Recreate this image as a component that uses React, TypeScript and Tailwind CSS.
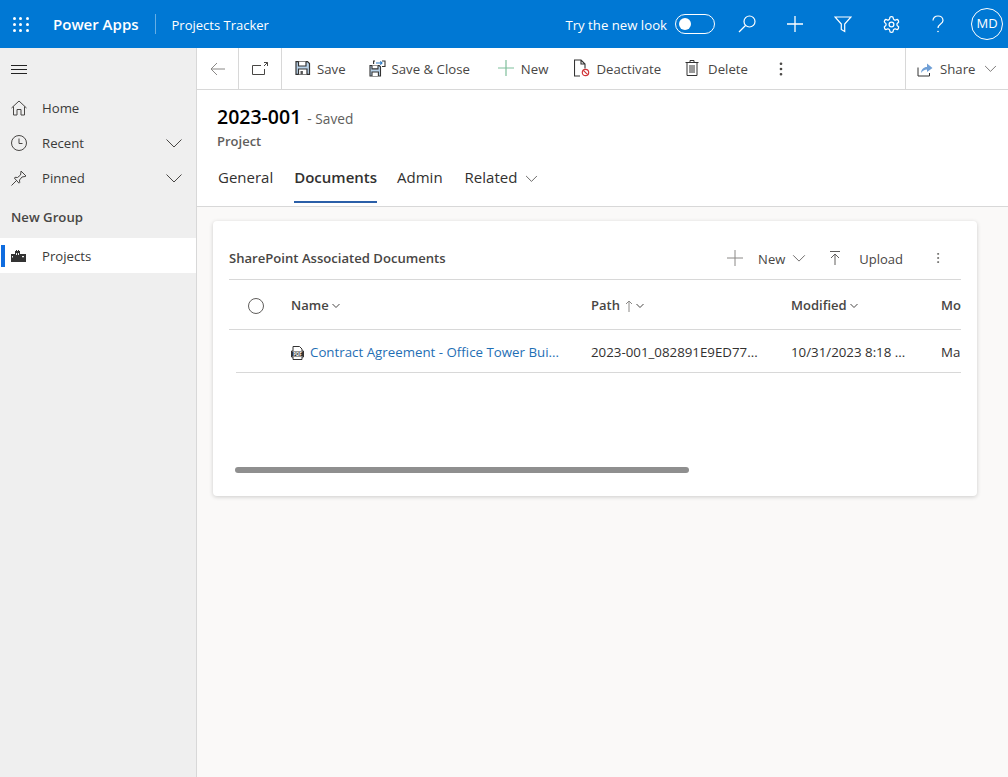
import { EllipsisVertical } from 'lucide-react';
import type { ReactNode } from 'react';

const FONT = "font-['Open_Sans','Noto_Sans',sans-serif]";

const Chevron = ({ size = 18, className = '' }: { size?: number; className?: string }) => (
  <svg width={size} height={size} viewBox="0 0 18 18" fill="none" stroke="currentColor" strokeWidth="1" className={className}>
    <path d="M1.5 5.5 9 13l7.5-7.5" />
  </svg>
);

const TinyChevron = () => (
  <svg width="8" height="6" viewBox="0 0 8 6" fill="none" stroke="#484644" strokeWidth="1" className="ml-[3px]">
    <path d="M.5 1 4 4.5 7.5 1" />
  </svg>
);

const PlusMark = ({ size = 16, stroke = '#605e5c', width = 1, className = '' }: { size?: number; stroke?: string; width?: number; className?: string }) => (
  <svg width={size} height={size} viewBox="0 0 16 16" fill="none" stroke={stroke} strokeWidth={width} className={className}>
    <path d="M0 8h16M8 0v16" />
  </svg>
);

const SaveIcon = () => (
  <svg width="16" height="16" viewBox="0 0 16 16" fill="none" stroke="#333" strokeWidth="1.2">
    <path d="M1 1.600h11.500l2 2v10.800H1z" fill="#b9d3ea" />
    <path d="M3.500 1.600v4.400h7.500V1.600" fill="#fff" />
    <path d="M3.500 14.400V9h8.500v5.400" fill="#fff" />
    <path d="M5.500 11h2.400v3.400H5.500z" fill="#555" stroke="none" />
  </svg>
);

const SaveCloseIcon = () => (
  <svg width="17" height="17" viewBox="0 0 17 17" fill="none" stroke="#333" strokeWidth="1.1">
    <path d="M1 5.500h9.200l1.300 1.300v9.200H1z" fill="#b9d3ea" />
    <path d="M3 5.500v3.400h6V5.500" fill="#fff" />
    <path d="M3 16v-4h6.400v4" fill="#fff" />
    <path d="M6 1H4.600v3M13 1h3v5.500h-3" />
    <path d="M7 3h6M11.300 1.400 13 3l-1.700 1.600" stroke="#2b79c2" />
  </svg>
);

const DeactivateIcon = () => (
  <svg width="16" height="18" viewBox="0 0 16 18" fill="none" stroke="#333" strokeWidth="1.100">
    <path d="M6 17H.5V1H7l4 4v4.500M7 1v4h4" />
    <circle cx="11.500" cy="13.500" r="3.200" stroke="#d13438" strokeWidth="1.200" />
    <path d="m9.300 11.300 4.400 4.400" stroke="#d13438" strokeWidth="1.200" />
  </svg>
);

const TrashIcon = () => (
  <svg width="14" height="16" viewBox="0 0 14 16" fill="none" stroke="#333" strokeWidth="1">
    <path d="M.5 2.500h13M5 2.500v-2h4v2M2 2.500v13h10v-13M5 5v8M7 5v8M9 5v8" />
  </svg>
);

const ShareIcon = () => (
  <svg width="16" height="16" viewBox="0 0 16 16" fill="none">
    <path d="M1 6.500V15h11.500v-3" stroke="#333" strokeWidth="1" />
    <path d="M4 12c.3-3.500 2.500-6 6-6V2.500L15.500 7 10 11V8.500C7.500 8.500 5.500 9.800 4 12z" fill="#6f9fd6" />
  </svg>
);

const PopoutIcon = () => (
  <svg width="16" height="13" viewBox="0 0 16 13" fill="none" stroke="#484644" strokeWidth="1">
    <path d="M9 3.500H.5v9h12V7M12 .5h3.500V4" />
    <path d="M15.500.5 12 4" />
  </svg>
);

const HomeIcon = () => (
  <svg width="16" height="16" viewBox="0 0 16 16" fill="none" stroke="#484644" strokeWidth="1">
    <path d="M.5 8 8 1l7.500 7M2.500 6.500v8.500h3.500V9.500h4V15h3.500V6.500" />
  </svg>
);

const ClockIcon = () => (
  <svg width="16" height="16" viewBox="0 0 16 16" fill="none" stroke="#484644" strokeWidth="1">
    <circle cx="8" cy="8" r="7.500" />
    <path d="M8 3.500V8.500h3.500" />
  </svg>
);

const PinIcon = () => (
  <svg width="16" height="16" viewBox="0 0 16 16" fill="none" stroke="#484644" strokeWidth="1">
    <path d="M.5 15.500 6 10M10 1l5 5-1 .5-3 .5-2.500 3 .2 2.500-.7.700L3.300 8l.7-.7 2.500.2 3-2.500.5-3z" />
  </svg>
);

const BuildingIcon = () => (
  <svg width="15" height="12" viewBox="0 0 15 12" fill="#333">
    <path d="M0 4h4v8H0zM4 1h1V0h1v1h1V0h1v1h1v11H4zM9 4h6v8H9z" />
    <path d="M5 3h1v2H5zM7 3h1v2H7zM11 6h2v1.200h-2zM1 6h1v1.500H1z" fill="#efefef" />
  </svg>
);

const PdfIcon = () => (
  <svg width="13" height="14" viewBox="0 0 13 14" className="shrink-0">
    <path d="M2 .5h6.500L11 3v2h1.500v6H11v2.500H2V11H.5V5H2z" fill="#fff" stroke="#333" />
    <path d="M1 5.500h11v5H1z" fill="#333" />
    <text x="6.500" y="9.600" textAnchor="middle" fontSize="4.500" fontWeight="700" fill="#fff">PDF</text>
  </svg>
);

const NavItem = ({ icon, label, chevron }: { icon: ReactNode; label: string; chevron?: boolean }) => (
  <div className="flex h-[35px] items-center pl-[11px] pr-[13px] text-[13.2px] text-[#3b3a39]">
    <span className="flex w-[31px] shrink-0">{icon}</span>
    <span className="flex-1 pt-[2px]">{label}</span>
    {chevron && <Chevron className="text-[#484644]" />}
  </div>
);

const ToolButton = ({ icon, label, gap = 'gap-[7px]', className = '' }: { icon: ReactNode; label: string; gap?: string; className?: string }) => (
  <div className={`flex items-center ${gap} text-[13.2px] text-[#484644] ${className}`}>
    {icon}
    <span className="pt-[2px]">{label}</span>
  </div>
);

export default function App() {
  return (
    <div className={`flex h-[777px] w-[1008px] flex-col overflow-hidden bg-[#faf9f8] ${FONT}`}>
      {/* Top app bar */}
      <header className="flex h-[48px] shrink-0 items-center bg-[#0078d4] text-white">
        <div className="ml-[13px] grid w-[16px] grid-cols-3 gap-[3px]">
          {Array.from({ length: 9 }).map((_, i) => (
            <span key={i} className="h-[3px] w-[3px] rounded-full bg-white" />
          ))}
        </div>
        <span className="ml-[24px] text-[15px] font-semibold">Power Apps</span>
        <span className="ml-[16px] h-[20px] w-px bg-white/40" />
        <span className="ml-[16px] pt-[3px] text-[13px]">Projects Tracker</span>
        <span className="ml-auto pt-[3px] text-[13.2px]">Try the new look</span>
        <div className="ml-[8px] flex h-[20px] w-[40px] items-center rounded-full border border-white pl-[3px]">
          <span className="h-[12px] w-[12px] rounded-full bg-white" />
        </div>
        <svg width="20" height="20" viewBox="0 0 20 20" fill="none" stroke="white" strokeWidth="1.2" className="ml-[22px]">
          <circle cx="12.500" cy="7.500" r="5.500" />
          <path d="M8.500 11.500 2 18" />
        </svg>
        <PlusMark stroke="white" width={1.3} className="ml-[30px]" />
        <svg width="18" height="18" viewBox="0 0 18 18" fill="none" stroke="white" strokeWidth="1.2" className="ml-[31px]">
          <path d="M1 2h16l-6.300 7v7.500l-3.400-2V9z" />
        </svg>
        <svg width="19" height="19" viewBox="0 0 24 24" fill="none" stroke="white" strokeWidth="1.600" className="ml-[30px]">
          <path d="M12.220 2h-.44a2 2 0 0 0-2 2v.18a2 2 0 0 1-1 1.730l-.43.250a2 2 0 0 1-2 0l-.15-.080a2 2 0 0 0-2.730.730l-.22.380a2 2 0 0 0 .730 2.730l.15.100a2 2 0 0 1 1 1.720v.510a2 2 0 0 1-1 1.740l-.15.090a2 2 0 0 0-.730 2.730l.22.380a2 2 0 0 0 2.730.730l.15-.080a2 2 0 0 1 2 0l.43.250a2 2 0 0 1 1 1.730V20a2 2 0 0 0 2 2h.44a2 2 0 0 0 2-2v-.18a2 2 0 0 1 1-1.730l.43-.250a2 2 0 0 1 2 0l.15.080a2 2 0 0 0 2.730-.730l.22-.390a2 2 0 0 0-.730-2.730l-.15-.080a2 2 0 0 1-1-1.740v-.500a2 2 0 0 1 1-1.740l.15-.090a2 2 0 0 0 .730-2.730l-.22-.380a2 2 0 0 0-2.730-.730l-.15.080a2 2 0 0 1-2 0l-.43-.250a2 2 0 0 1-1-1.730V4a2 2 0 0 0-2-2z" />
          <circle cx="12" cy="12" r="3" />
        </svg>
        <svg width="14" height="18" viewBox="0 0 14 18" fill="none" stroke="white" strokeWidth="1.200" className="ml-[30px]">
          <path d="M2 5.500C2 3 4 1 7 1s5 2 5 4.500c0 3.500-5 3.500-5 7.500" />
          <circle cx="7" cy="16.500" r=".8" fill="white" stroke="none" />
        </svg>
        <div className="ml-[26px] mr-[5px] flex h-[32px] w-[32px] items-center justify-center rounded-full border border-white text-[13px]">MD</div>
      </header>

      <div className="flex min-h-0 flex-1">
        {/* Left navigation */}
        <aside className="w-[197px] shrink-0 border-r border-[#d8d8d8] bg-[#efefef]">
          <div className="flex h-[42px] items-center pl-[11px]">
            <svg width="16" height="9" viewBox="0 0 16 9" stroke="#222" strokeWidth="1">
              <path d="M0 .5h16M0 4.500h16M0 8.500h16" />
            </svg>
          </div>
          <NavItem icon={<HomeIcon />} label="Home" />
          <NavItem icon={<ClockIcon />} label="Recent" chevron />
          <NavItem icon={<PinIcon />} label="Pinned" chevron />
          <div className="flex h-[43px] items-center pl-[11px] pt-[2px] text-[13.2px] font-semibold text-[#484644]">New Group</div>
          <div className="flex h-[35px] items-center bg-white text-[13.2px] text-[#3b3a39]">
            <span className="ml-px h-[22px] w-[4px] bg-[#0f6cdf]" />
            <span className="ml-[6px] flex w-[31px]"><BuildingIcon /></span>
            <span className="pt-[2px]">Projects</span>
          </div>
        </aside>

        <main className="flex min-w-0 flex-1 flex-col">
          {/* Command bar */}
          <div className="flex h-[42px] shrink-0 items-center border-b border-[#d8d8d8] bg-white">
            <div className="flex h-full w-[42px] items-center justify-center border-r border-[#d8d8d8]">
              <svg width="16" height="14" viewBox="0 0 16 14" fill="none" stroke="#8a8886" strokeWidth="1">
                <path d="M15 7H1M7 1 1 7l6 6" />
              </svg>
            </div>
            <div className="flex h-full w-[43px] items-center justify-center border-r border-[#d8d8d8]">
              <PopoutIcon />
            </div>
            <ToolButton icon={<SaveIcon />} label="Save" gap="gap-[6px]" className="ml-[13px]" />
            <ToolButton icon={<SaveCloseIcon />} label="Save & Close" gap="gap-[6px]" className="ml-[23px]" />
            <ToolButton icon={<PlusMark stroke="#7fbf9b" width={1.2} />} label="New" className="ml-[28px]" />
            <ToolButton icon={<DeactivateIcon />} label="Deactivate" gap="gap-[6px]" className="ml-[26px]" />
            <ToolButton icon={<TrashIcon />} label="Delete" gap="gap-[9px]" className="ml-[24px]" />
            <EllipsisVertical size={18} strokeWidth={1.6} className="ml-[24px] text-[#484644]" />
            <div className="ml-auto flex h-full w-[103px] items-center border-l border-[#d8d8d8] pl-[11px] text-[13.2px] text-[#484644]">
              <ShareIcon />
              <span className="ml-[7px] pt-[2px]">Share</span>
              <Chevron size={13} className="ml-[9px]" />
            </div>
          </div>

          {/* Record header and tabs */}
          <div className="h-[117px] shrink-0 border-b border-[#d8d8d8] bg-white pl-[21px]">
            <div className="-ml-px flex items-baseline pt-[13px] leading-[28px]">
              <span className="text-[19.5px] font-semibold text-black">2023-001</span>
              <span className="ml-[6px] text-[13.7px] text-[#605e5c]">- Saved</span>
            </div>
            <div className="-ml-px -mt-px text-[13px] font-semibold leading-[18px] text-[#605e5c]">Project</div>
            <div className="mt-[10px] flex h-[46px] items-start text-[15px] text-[#323130]">
              <span className="pt-[6px]">General</span>
              <span className="ml-[21px] h-[43px] border-b-2 border-[#2b5fa8] pt-[6px] font-semibold">Documents</span>
              <span className="ml-[20px] pt-[6px]">Admin</span>
              <span className="ml-[22px] flex items-center pt-[6px]">
                Related
                <Chevron size={13} className="ml-[8px] mt-[2px]" />
              </span>
            </div>
          </div>

          {/* Documents card */}
          <div className="pl-[16px] pr-[31px] pt-[14px]">
            <section className="h-[275px] overflow-hidden rounded-[4px] bg-white px-[16px] shadow-[0_1px_4px_rgba(0,0,0,0.18)]">
              <div className="flex h-[59px] items-center border-b border-[#d8d8d8] pt-[16px] text-[#484644]">
                <span className="pt-[2px] text-[13.1px] font-semibold text-[#484644]">SharePoint Associated Documents</span>
                <PlusMark stroke="#8a8886" className="ml-auto" />
                <span className="ml-[15px] pt-[3px] text-[13px]">New</span>
                <Chevron size={14} className="ml-[7px]" />
                <svg width="12" height="16" viewBox="0 0 12 16" fill="none" stroke="#605e5c" strokeWidth="1" className="ml-[23px]">
                  <path d="M1 1.500h10M6 15V4M2 8l4-4 4 4" />
                </svg>
                <span className="ml-[18px] pt-[3px] text-[13px]">Upload</span>
                <EllipsisVertical size={14} strokeWidth={1.4} className="ml-[28px] mr-[16px] text-[#605e5c]" />
              </div>

              {/* Grid header */}
              <div className="grid h-[50px] grid-cols-[62px_300px_200px_150px_20px] items-center border-b border-[#d8d8d8] pt-[2px] text-[13px] font-semibold text-[#484644]">
                <span className="ml-[19px] h-[16px] w-[16px] rounded-full border border-[#605e5c]" />
                <span className="flex items-center">Name<TinyChevron /></span>
                <span className="flex items-center">
                  Path
                  <svg width="8" height="12" viewBox="0 0 8 12" fill="none" stroke="#8a8886" strokeWidth="1" className="ml-[5px]">
                    <path d="M4 12V1M1 4l3-3 3 3" />
                  </svg>
                  <TinyChevron />
                </span>
                <span className="flex items-center">Modified<TinyChevron /></span>
                <span className="overflow-hidden whitespace-nowrap">Mo</span>
              </div>

              {/* Grid row */}
              <div className="ml-[7px] grid h-[43px] grid-cols-[55px_300px_200px_150px_20px] items-center border-b border-[#d8d8d8] pt-[4px] text-[13.3px] text-[#323130]">
                <span />
                <span className="flex items-center gap-[6px] whitespace-nowrap text-[#1f6fb5]">
                  <PdfIcon />
                  <span>Contract Agreement - Office Tower Bui...</span>
                </span>
                <span className="whitespace-nowrap">2023-001_082891E9ED77...</span>
                <span className="whitespace-nowrap">10/31/2023 8:18 ...</span>
                <span className="overflow-hidden whitespace-nowrap">Ma</span>
              </div>

              {/* Horizontal scrollbar */}
              <div className="ml-[6px] mt-[94px] h-[6px] w-[454px] rounded-full bg-[#8f8f8f]" />
            </section>
          </div>
        </main>
      </div>
    </div>
  );
}
